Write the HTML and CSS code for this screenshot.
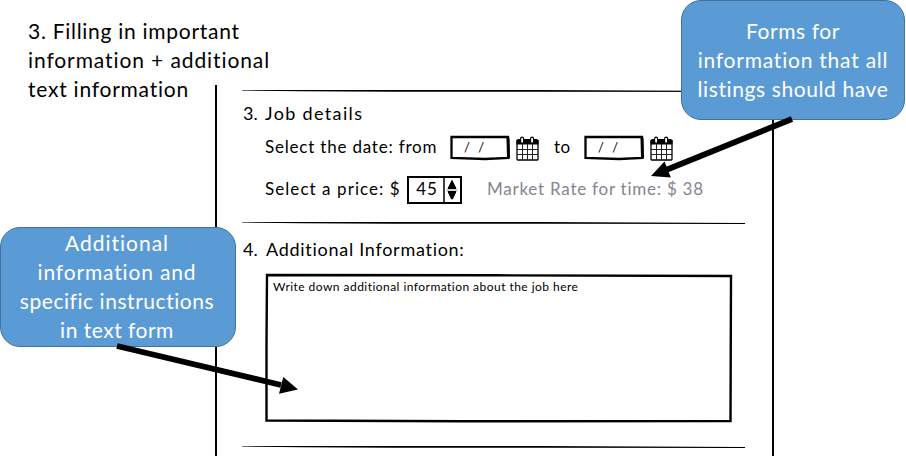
FILE: index.html
```html
<!DOCTYPE html>
<html lang="en">
<head>
<meta charset="utf-8">
<title>Job details</title>
<link rel="stylesheet" href="styles.css">
</head>
<body>
<svg class="defs" width="0" height="0">
  <defs>
    <symbol id="calendar" viewBox="0 0 23 25">
      <path d="M1 5V23.2q0 .8 .8 .8H21.2q.8 0 .8-.8V5z" fill="#fff" stroke="#000" stroke-width="1.3"/>
      <path d="M.5 4 2 3H21l1.5 1.500V8.500H.5z"/>
      <path d="M6.500 8V24M11.500 8V24M16.500 8V24M1 13.500H22M1 18.500H22" stroke="#222" stroke-width="1" fill="none"/>
      <rect x="4.600" y="1.200" width="3" height="6" rx="1.500" fill="#fff" stroke="#000" stroke-width="1.200"/>
      <rect x="14.600" y="1.200" width="3" height="6" rx="1.500" fill="#fff" stroke="#000" stroke-width="1.200"/>
    </symbol>
    <symbol id="rule" viewBox="0 0 503 4">
      <path d="M0 1 40 .9 300 1.100 503 2V3L300 2.700 150 2.700 60 2.200 0 1.500z"/>
    </symbol>
    <symbol id="datebox" viewBox="0 0 60 26">
      <path d="M1.500 2 58 1.800 58.500 23 35 24 1.500 23z" fill="#fff" stroke="#000" stroke-width="2.300"/>
      <path d="M58 3 58.500 23" stroke="#000" stroke-width="3"/>
    </symbol>
  </defs>
</svg>
<main class="slide">
  <p class="note"><span class="n1">3. Filling in important</span><br><span class="n2">information + additional</span><br><span class="n3">text information</span></p>

  <section class="panel">
    <svg class="rule"><use href="#rule"/></svg>
    <h2 class="title"><span class="num">3.</span><span class="job">Job details</span></h2>
    <div class="row dates">
      <span class="label from">Select the date: from</span>
      <div class="date"><svg class="frame"><use href="#datebox"/></svg><span class="slashes">/ /</span></div>
      <svg class="cal"><use href="#calendar"/></svg>
      <span class="to">to</span>
      <div class="date"><svg class="frame"><use href="#datebox"/></svg><span class="slashes">/ /</span></div>
      <svg class="cal"><use href="#calendar"/></svg>
    </div>
    <div class="row price">
      <span class="label cost">Select a price: $</span>
      <div class="spinner">
        <span class="value">45</span>
        <svg class="steps" viewBox="0 0 17 28"><path d="M1 0V28" stroke="#000" stroke-width="1.500"/><path d="M3 14H15" stroke="#aaa"/><path d="M9 4.500 13 12.500H5zM5 15.500H13L9.500 23H8.500z" stroke="#000" stroke-linejoin="round"/></svg>
      </div>
      <span class="rate">Market Rate for time: $ 38</span>
    </div>
    <svg class="rule"><use href="#rule"/></svg>
    <h2 class="title second"><span class="num">4.</span><span class="add">Additional Information:</span></h2>
    <div class="area">
      <svg class="frame" viewBox="0 0 468 151"><path d="M2 2 230 2.300 466 3 465.500 148 200 148.300 1.500 147.500 1.500 70z" fill="#fff" stroke="#000" stroke-width="2.400"/></svg>
      <span class="hint">Write down additional information about the job here</span>
    </div>
    <svg class="rule last"><use href="#rule"/></svg>
  </section>

  <aside class="callout right"><span class="r1">Forms for</span><span class="r2">information that all</span><span class="r3">listings should have</span></aside>
  <aside class="callout left"><span class="l1">Additional</span><span class="l2">information and</span><span class="l3">specific instructions</span><span class="l4">in text form</span></aside>
  <svg class="arrows" viewBox="0 0 906 460">
    <path d="M792 119 666 170M117 346 281 385" stroke="#000" stroke-width="5.800"/>
    <path d="M651 176 664.500 161.500 670.800 177.500zM298 389.500 279 393.800 283.300 377z"/>
  </svg>
</main>
</body>
</html>
```
FILE: styles.css
```css
* { box-sizing: border-box; }
body { margin: 0; background: #fff; color: #000; font-family: Lato, "Liberation Sans", sans-serif; font-variant-ligatures: none; }
svg { display: block; }
.defs { position: absolute; }
.slide { position: relative; width: 906px; height: 460px; overflow: hidden; }
.note { position: absolute; left: 28px; top: 16px; margin: 0; font-size: 21px; line-height: 29px; white-space: nowrap; }
.n1 { letter-spacing: .72px; }
.n2 { letter-spacing: .9px; }
.n3 { letter-spacing: .76px; }
.panel { margin: 0 0 0 215px; position: relative; top: 85px; width: 559px; height: 371px; padding: 4px 0 0 25px; border: solid #000; border-width: 0 2px; }
.rule { width: 503px; height: 4px; }
.title { display: flex; align-items: center; height: 42px; margin: 0; padding-bottom: 2px; font-size: 18px; font-weight: 400; white-space: nowrap; }
.num { width: 23px; padding-left: 1px; }
.job { letter-spacing: 1.350px; }
.add { padding-left: 1px; letter-spacing: .72px; }
.row { display: flex; align-items: center; padding-left: 23px; font-size: 17px; white-space: nowrap; }
.dates { height: 26px; }
.label, .to, .value, .rate { padding-bottom: 3px; }
.from { width: 185px; letter-spacing: .8px; }
.date { position: relative; width: 60px; height: 26px; }
.frame { position: absolute; inset: 0; width: 100%; height: 100%; }
.slashes { position: relative; display: block; padding-left: 14px; font-size: 13px; line-height: 25px; word-spacing: 5px; }
.cal { width: 23px; height: 25px; margin-left: 6px; }
.to { width: 45px; padding-left: 15px; letter-spacing: .5px; }
.price { height: 58px; margin-bottom: 2px; }
.cost { width: 142px; letter-spacing: 1.060px; }
.spinner { display: flex; align-items: center; width: 55px; height: 28px; border: 2px solid #000; }
.value { width: 36px; padding-left: 2px; text-align: center; letter-spacing: 1px; }
.steps { width: 17px; height: 28px; flex: none; }
.rate { margin-left: 25px; color: #85858f; letter-spacing: .76px; }
.second { height: 48px; padding-bottom: 0; }
.area { position: relative; width: 468px; height: 151px; margin-left: 23px; }
.hint { position: relative; display: block; padding: 6px 0 0 8px; font-size: 12px; line-height: 16px; white-space: nowrap; letter-spacing: .46px; }
.last { margin-top: 21px; }
.callout { position: absolute; display: flex; flex-direction: column; align-items: center; justify-content: center; background: #5b9bd5; border: 1px solid #41719c; border-radius: 20px; color: #fff; font-size: 21px; line-height: 29px; white-space: nowrap; }
.right { left: 681px; top: 0; width: 224px; height: 120px; padding-bottom: 1px; }
.left { left: 0; top: 227px; width: 236px; height: 120px; padding: 0 2px 3px 0; }
.r1 { letter-spacing: .6px; }
.r2 { letter-spacing: .78px; }
.r3 { letter-spacing: .6px; }
.l1 { letter-spacing: 1px; }
.l2 { letter-spacing: .85px; }
.l3 { letter-spacing: .55px; }
.l4 { letter-spacing: .5px; }
.arrows { position: absolute; inset: 0; width: 906px; height: 460px; }
```
